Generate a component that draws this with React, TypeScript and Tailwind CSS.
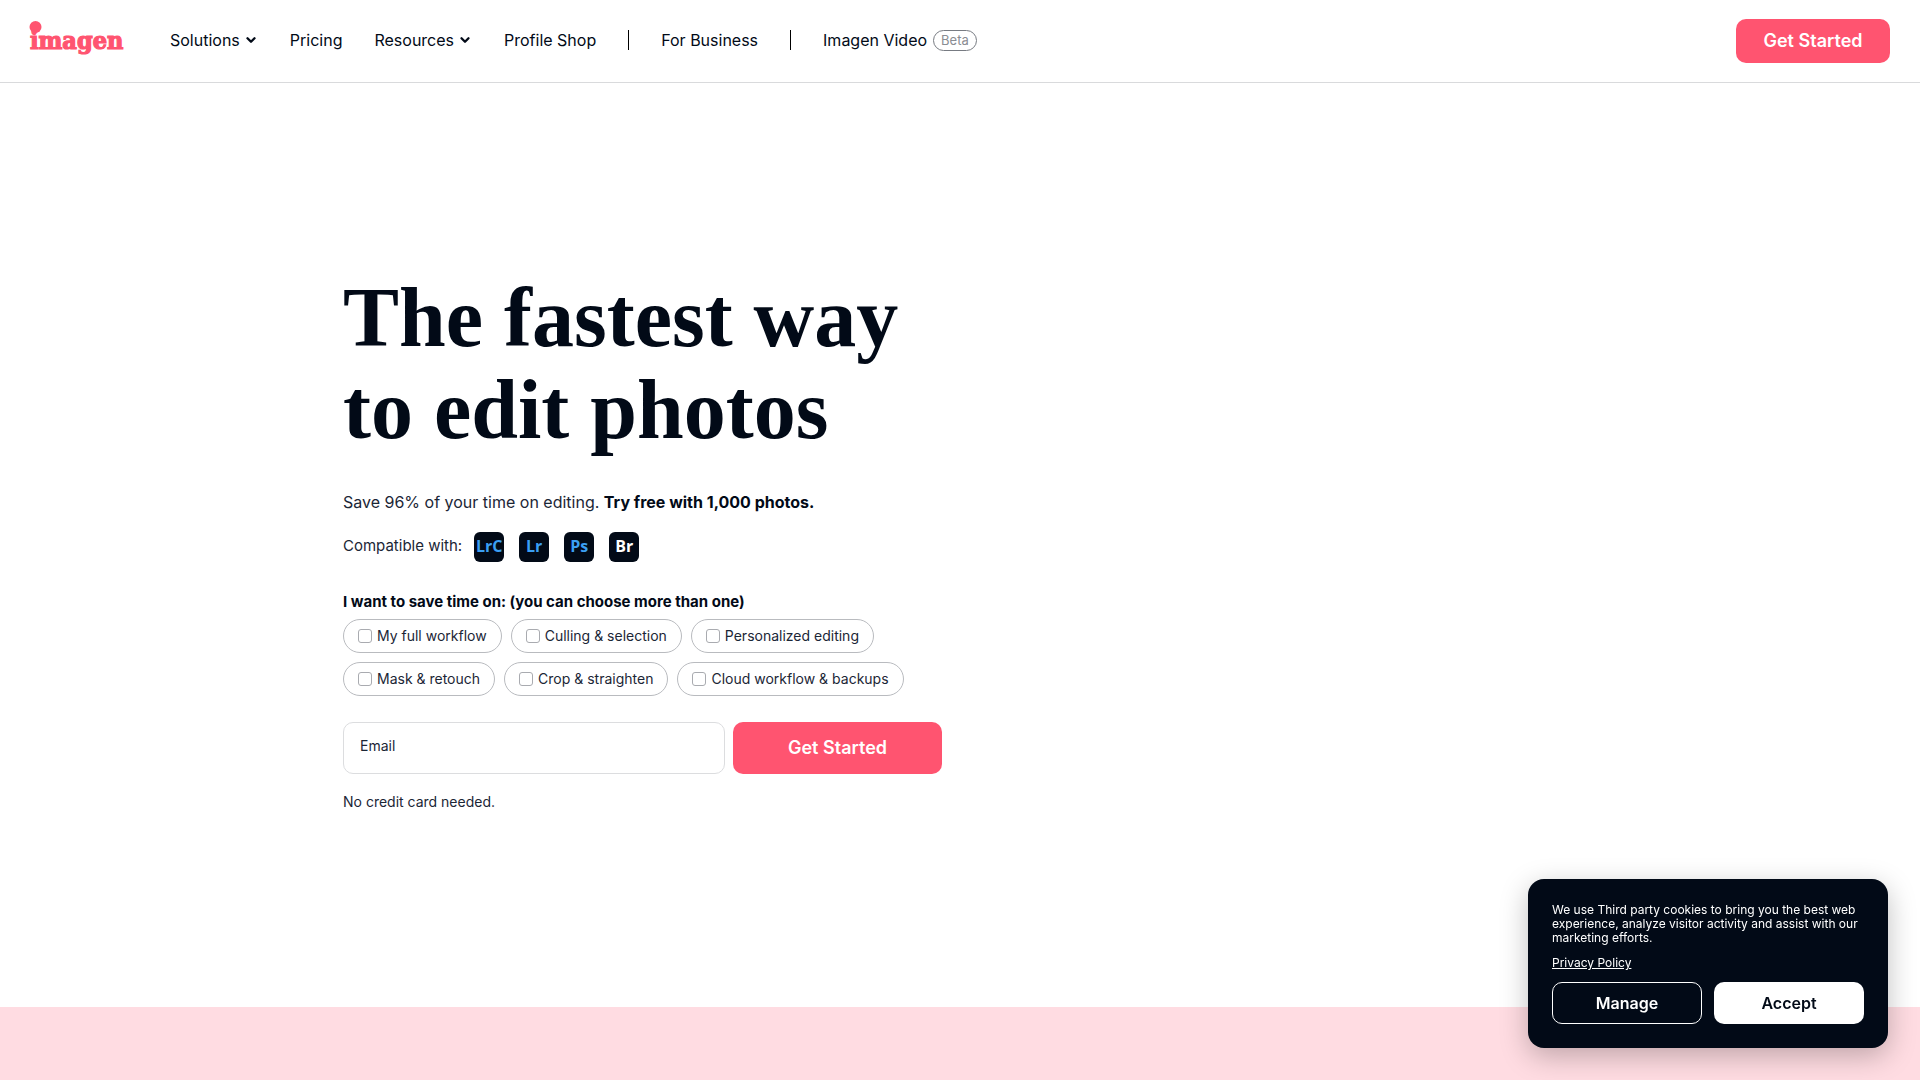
import { ChevronDown } from "lucide-react";

const GOALS = [
  "My full workflow",
  "Culling & selection",
  "Personalized editing",
  "Mask & retouch",
  "Crop & straighten",
  "Cloud workflow & backups",
];

const APPS = [
  { label: "LrC", color: "text-[#3b9ff3]" },
  { label: "Lr", color: "text-[#3b9ff3]" },
  { label: "Ps", color: "text-[#3b9ff3]" },
  { label: "Br", color: "text-white" },
];

function Logo() {
  return (
    <svg viewBox="0 0 96 40" className="h-10 w-24" fill="#ff5470" role="img" aria-label="imagen">
      <circle cx="6.5" cy="6" r="6" />
      <text
        x="1"
        y="28"
        fontSize="25"
        fontWeight="700"
        stroke="#ff5470"
        strokeWidth="1.2"
        fontFamily="'DejaVu Serif Condensed', 'DejaVu Serif', serif"
      >
        imagen
      </text>
    </svg>
  );
}

function NavLink({ label, menu = false }: { label: string; menu?: boolean }) {
  return (
    <a href="#" className="flex items-center gap-1">
      {label}
      {menu && <ChevronDown className="size-3.5" strokeWidth={4} />}
    </a>
  );
}

function Divider() {
  return <span className="h-5 w-px bg-black" />;
}

function SiteHeader() {
  return (
    <header className="flex items-center justify-between border-b border-[#d9dadc] py-[19px] pr-[30px] pl-[29px]">
      <div className="flex items-center gap-[45px]">
        <a href="#">
          <Logo />
        </a>
        <nav className="flex items-center gap-8 pb-0.5 text-base">
          <NavLink label="Solutions" menu />
          <NavLink label="Pricing" />
          <NavLink label="Resources" menu />
          <NavLink label="Profile Shop" />
          <Divider />
          <NavLink label="For Business" />
          <Divider />
          <a href="#" className="flex items-center gap-1.5">
            Imagen Video
            <span className="rounded-full border border-[#777b82] px-[7px] text-[13px] leading-[19px] text-[#8a8d93]">
              Beta
            </span>
          </a>
        </nav>
      </div>
      <button type="button" className="h-11 min-w-[154px] rounded-[10px] bg-[#ff5470] px-6 text-lg font-semibold text-white">
        Get Started
      </button>
    </header>
  );
}

function SignupForm() {
  return (
    <form className="mt-[30px]" onSubmit={(e) => e.preventDefault()}>
      <fieldset>
        <legend className="mb-[7px] text-[15px] leading-5 font-bold">
          I want to save time on: (you can choose more than one)
        </legend>
        <div className="flex flex-wrap gap-[9px]">
          {GOALS.map((goal) => (
            <label
              key={goal}
              className="flex h-[34px] items-center gap-[5px] rounded-full border border-[#b9bbbf] px-3.5 text-sm text-[#1b2636]"
            >
              <input
                type="checkbox"
                className="size-3.5 appearance-none rounded-[3px] border border-[#a9abb0] bg-white checked:bg-[#ff5470]"
              />
              {goal}
            </label>
          ))}
        </div>
      </fieldset>
      <div className="mt-[26px] flex gap-2">
        <input
          type="email"
          aria-label="Email"
          placeholder="Email"
          className="h-[52px] min-w-0 flex-1 rounded-[10px] border border-[#dcdddf] px-4 pb-1 text-sm placeholder:text-[#1b2636]"
        />
        <button type="submit" className="h-[52px] w-[209px] rounded-[10px] bg-[#ff5470] text-lg font-semibold text-white">
          Get Started
        </button>
      </div>
    </form>
  );
}

function Hero() {
  return (
    <main className="mx-auto flex min-h-[924px] w-full max-w-[1234px] flex-col justify-center pb-[7px]">
      <div className="w-full max-w-[599px]">
        <h1 className="font-['Liberation_Serif',serif] text-[84px] leading-[92px] font-bold whitespace-nowrap">
          The fastest way
          <br />
          to edit photos
        </h1>
        <p className="mt-[34px] text-base text-[#1b2636]">
          Save 96% of your time on editing. <b className="font-bold text-[#020a17]">Try free with 1,000 photos.</b>
        </p>
        <div className="mt-[18px] flex items-center gap-3 text-[15px] text-[#1b2636]">
          Compatible with:
          <ul className="flex gap-[15px]">
            {APPS.map((app) => (
              <li
                key={app.label}
                className={`flex size-[30px] items-center justify-center rounded-md bg-[#020a17] pb-0.5 font-['Open_Sans',sans-serif] text-base leading-none font-bold ${app.color}`}
              >
                {app.label}
              </li>
            ))}
          </ul>
        </div>
        <SignupForm />
        <p className="mt-[18px] text-sm text-[#1b2636]">No credit card needed.</p>
      </div>
    </main>
  );
}

function CookieBanner() {
  return (
    <aside
      aria-label="Cookies"
      className="fixed right-8 bottom-8 w-[360px] rounded-2xl bg-[#020a17] p-6 text-white shadow-[0_8px_28px_rgba(0,0,0,0.25)]"
    >
      <p className="text-xs leading-[14px]">
        We use Third party cookies to bring you the best web experience, analyze visitor activity and assist with our
        marketing efforts.
      </p>
      <a href="#" className="mt-[11px] block w-fit text-xs leading-[14px] underline">
        Privacy Policy
      </a>
      <div className="mt-3 grid grid-cols-2 gap-3 text-base font-semibold">
        <button type="button" className="h-[42px] rounded-[10px] border border-white">
          Manage
        </button>
        <button type="button" className="h-[42px] rounded-[10px] bg-white text-[#020a17]">
          Accept
        </button>
      </div>
    </aside>
  );
}

export default function App() {
  return (
    <div className="flex min-h-screen flex-col bg-white font-['Inter',sans-serif] text-[#020a17]">
      <SiteHeader />
      <Hero />
      <section className="flex-1 bg-[#ffdce2]" />
      <CookieBanner />
    </div>
  );
}
